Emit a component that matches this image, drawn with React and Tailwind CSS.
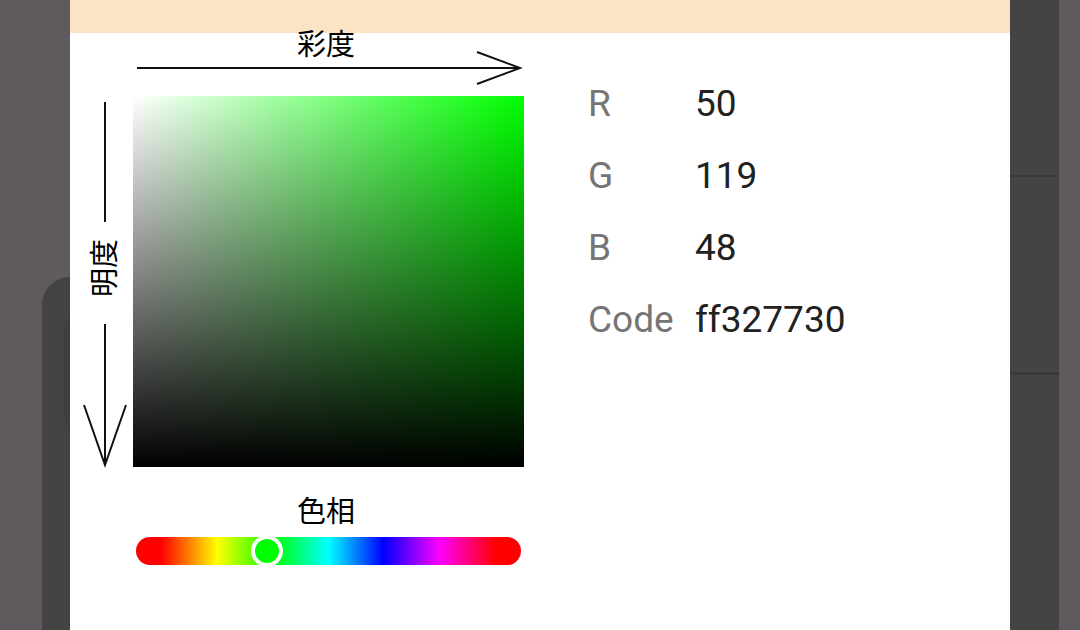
import React from "react";

const FONT = "font-['Roboto','Noto_Sans_CJK_JP',sans-serif]";

function Row({ label, value }) {
  return (
    <div className="flex h-[72px] items-center text-[37px] leading-[72px]">
      <div className="w-[107px] text-[#757575]">{label}</div>
      <div className="text-[#212121]">{value}</div>
    </div>
  );
}

export default function App() {
  return (
    <div className={`flex h-[630px] w-[1080px] overflow-hidden bg-[#5f5a5e] ${FONT}`}>
      {/* left background strip */}
      <div className="flex w-[70px] flex-none pl-[42px] pt-[277px]">
        <div className="flex-1 overflow-hidden rounded-tl-[28px] bg-[#434343] pt-[28px] pl-[21px]">
          <div className="h-[135px] w-[40px] rounded-l-[30px] bg-[#3f3f3f]" />
        </div>
      </div>

      {/* dialog */}
      <div className="flex w-[940px] flex-none flex-col bg-white">
        <div className="h-[33px] flex-none bg-[#fbe3c6]" />
        <div className="flex">
          {/* picker */}
          <div className="flex w-[454px] flex-none flex-col">
            <div className="h-[63px] flex-none">
              <div className="-mt-px ml-[63px] h-[26px] w-[391px] pr-[5px] text-center text-[29px] leading-[26px] text-black">
                彩度
              </div>
              <svg className="ml-[66px] block overflow-visible" width="386" height="28">
                <line x1="1" y1="10" x2="384" y2="10" stroke="#111" strokeWidth="2" />
                <polyline points="341,-6 384,10 341,26" fill="none" stroke="#111" strokeWidth="2" />
              </svg>
            </div>
            <div className="flex">
              <div className="flex w-[63px] flex-none flex-col items-center pl-[7px]">
                <svg className="mt-[6px] block" width="4" height="120">
                  <line x1="2" y1="0" x2="2" y2="120" stroke="#111" strokeWidth="2" />
                </svg>
                <div className="flex h-[102px] items-center pb-[10px]">
                  <div className="rotate-180 text-[29px] leading-[28px] text-black [text-orientation:sideways] [writing-mode:vertical-rl]">
                    明度
                  </div>
                </div>
                <svg className="block overflow-visible" width="44" height="143">
                  <line x1="22" y1="0" x2="22" y2="141" stroke="#111" strokeWidth="2" />
                  <polyline points="1,81 22,141 43,81" fill="none" stroke="#111" strokeWidth="2" />
                </svg>
              </div>
              <div className="h-[371px] w-[391px] flex-none bg-[linear-gradient(to_top,#000,rgba(0,0,0,0)),linear-gradient(to_right,#fff,#00ff00)]" />
            </div>
            <div className="ml-[63px] mt-[31px] h-[29px] w-[391px] pr-[5px] text-center text-[29px] leading-[29px] text-black">
              色相
            </div>
            <div className="relative ml-[66px] mt-[10px] h-[28px] w-[385px] rounded-full bg-[linear-gradient(to_right,#f00_6.5%,#ff0_21.1%,#0f0_35.7%,#0ff_50%,#00f_64.3%,#f0f_78.9%,#f00_93.5%)]">
              <div className="absolute left-[115px] top-[-2px] h-[32px] w-[32px] rounded-full border-[4px] border-white bg-[#00ff00]" />
            </div>
          </div>

          {/* values */}
          <div className="ml-[64px] flex flex-col pt-[35px]">
            <Row label="R" value="50" />
            <Row label="G" value="119" />
            <Row label="B" value="48" />
            <Row label="Code" value="ff327730" />
          </div>
        </div>
      </div>

      {/* right background strip */}
      <div className="flex w-[70px] flex-none">
        <div className="flex w-[49px] flex-none flex-col bg-[#444444]">
          <div className="h-[175px] flex-none" />
          <div className="h-[2px] flex-none bg-[#3a3a3a]" />
          <div className="h-[195px] flex-none" />
          <div className="h-[3px] flex-none bg-[#3a3a3a]" />
        </div>
      </div>
    </div>
  );
}
